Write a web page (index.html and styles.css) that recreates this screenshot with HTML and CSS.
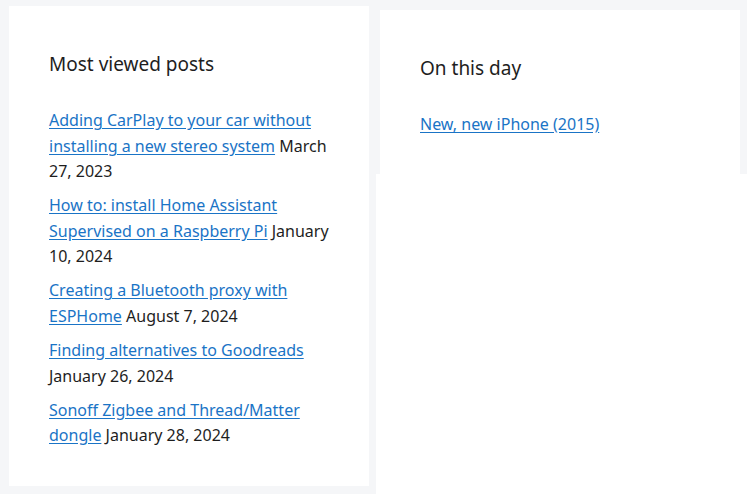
FILE: index.html
```html
<!DOCTYPE html>
<html lang="en">
<head>
  <meta charset="UTF-8">
  <title>Sidebar widgets</title>
  <link rel="stylesheet" href="styles.css">
</head>
<body>

  <div class="widgets">
    <div class="col col-left">
      <section class="widget">
        <h2>Most viewed posts</h2>
        <ul class="posts">
          <li><a href="#">Adding CarPlay to your car without installing a new stereo system</a> March 27, 2023</li>
          <li><a href="#">How to: install Home Assistant Supervised on a Raspberry Pi</a> January 10, 2024</li>
          <li><a href="#">Creating a Bluetooth proxy with ESPHome</a> August 7, 2024</li>
          <li><a href="#">Finding alternatives to Goodreads</a> January 26, 2024</li>
          <li><a href="#">Sonoff Zigbee and Thread/Matter dongle</a> January 28, 2024</li>
        </ul>
      </section>
    </div>

    <div class="col col-right">
      <section class="widget">
        <h2>On this day</h2>
        <ul class="posts">
          <li><a href="#">New, new iPhone (2015)</a></li>
        </ul>
      </section>
    </div>
  </div>

</body>
</html>
```

FILE: styles.css
```css
body {
  margin: 0;
  background-color: #ffffff;
  font-family: "Noto Sans", "Open Sans", sans-serif;
  color: #1e1e1e;
}

.widgets {
  display: grid;
  grid-template-columns: 376px 1fr;
  align-items: start;
  height: 494px;
}

.col {
  background-color: #f5f6f8;
}

.col-left {
  height: 100%;
  box-sizing: border-box;
  padding: 6px 7px 8px 9px;
}

.col-right {
  padding: 10px 7px 0 4px;
}

.widget {
  background-color: #ffffff;
  padding: 46px 40px 36px 40px;
  box-sizing: border-box;
}

.col-left .widget {
  height: 100%;
}

h2 {
  margin: 0 0 32px 0;
  font-size: 19px;
  font-weight: normal;
  line-height: 24px;
}

.posts {
  list-style: none;
  margin: 0;
  padding: 0;
  font-size: 16px;
  line-height: 25.6px;
}

.posts li {
  margin-bottom: 8.4px;
}

.posts li:last-child {
  margin-bottom: 0;
}

.posts a {
  color: #1a74c6;
  text-decoration: underline;
  text-underline-offset: 2px;
}
```
